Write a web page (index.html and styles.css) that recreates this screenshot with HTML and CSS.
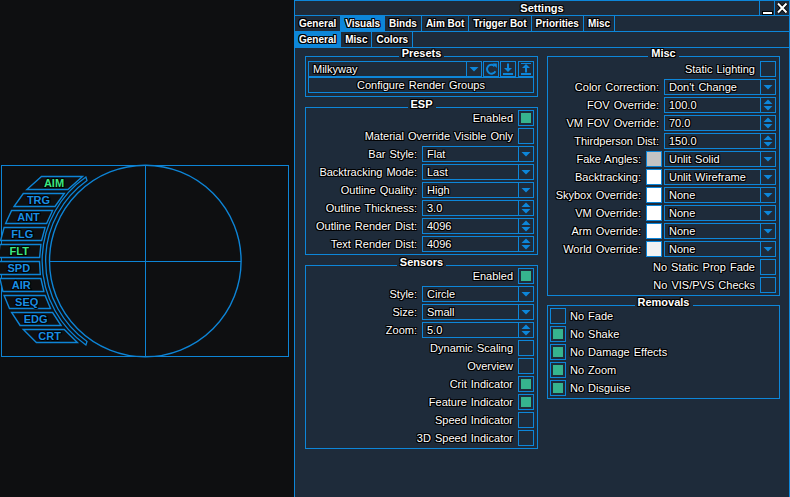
FILE: index.html
```html
<!DOCTYPE html>
<html>
<head>
<meta charset="utf-8">
<link rel="stylesheet" href="styles.css">
</head>
<body>
<div class="desktop">
  <div class="radar-pane">
    <svg class="radar" width="294" height="497" viewBox="0 0 294 497">
      <g fill="none" stroke="#0d84d6">
        <rect x="1.5" y="165.5" width="287" height="191"/>
        <circle cx="145.3" cy="261" r="95.8" stroke-width="1.4"/>
        <line x1="49" y1="261.5" x2="241" y2="261.5"/>
        <line x1="145.5" y1="165" x2="145.5" y2="357"/>
        <path stroke-width="1.3" d="M85.9 177 A102.5 102.5 0 0 0 85.9 345 L87 341.5 A99 99 0 0 1 87 180.5 Z"/>
        <g stroke-width="1.4" fill="#0e0f11">
          <polygon points="41.5,176.5 82.5,176.5 67.9,189.5 26.9,189.5"/>
          <polygon points="23.3,193.5 64.3,193.5 55,206.5 14,206.5"/>
          <polygon points="11.6,210.5 52.6,210.5 46.6,223.5 5.6,223.5"/>
          <polygon points="4.1,227.5 45.1,227.5 41.6,240.5 0.6,240.5"/>
          <polygon points="-0.1,244.5 40.9,244.5 39.6,257.5 -1.4,257.5"/>
          <polygon points="-1.5,261.5 39.5,261.5 40.3,274.5 -0.7,274.5"/>
          <polygon points="-0.1,278.5 40.9,278.5 43.9,291.5 2.9,291.5"/>
          <polygon points="4.1,295.5 45.1,295.5 50.5,308.5 9.5,308.5"/>
          <polygon points="11.6,312.5 52.6,312.5 61.1,325.5 20.1,325.5"/>
          <polygon points="23.3,329.5 64.3,329.5 77.4,342.5 36.4,342.5"/>
        </g>
      </g>
      <g class="radar-labels" text-anchor="middle">
        <text x="54" y="187" class="hot">AIM</text>
        <text x="38.5" y="204">TRG</text>
        <text x="28.5" y="221">ANT</text>
        <text x="22.3" y="238">FLG</text>
        <text x="19.2" y="255" class="hot">FLT</text>
        <text x="18.8" y="272">SPD</text>
        <text x="21.3" y="289">AIR</text>
        <text x="26.7" y="306">SEQ</text>
        <text x="35.6" y="323">EDG</text>
        <text x="49.6" y="340">CRT</text>
      </g>
    </svg>
  </div>

  <div class="window">
    <div class="titlebar">
      <div class="title">Settings</div>
      <div class="tb-btn">
        <svg width="14" height="14" viewBox="0 0 14 14">
          <rect x="2" y="10" width="11" height="4" fill="#000"/>
          <rect x="3" y="11" width="9" height="2" fill="#fff"/>
        </svg>
      </div>
      <div class="tb-btn">
        <svg width="14" height="14" viewBox="0 0 14 14">
          <path d="M3 2.5 L11.5 11.5 M11.5 2.5 L3 11.5" stroke="#000" stroke-width="4"/>
          <path d="M3 2.5 L11.5 11.5 M11.5 2.5 L3 11.5" stroke="#fff" stroke-width="2"/>
        </svg>
      </div>
    </div>

    <div class="tabs">
      <div class="tab">General</div>
      <div class="tab active">Visuals</div>
      <div class="tab">Binds</div>
      <div class="tab">Aim Bot</div>
      <div class="tab">Trigger Bot</div>
      <div class="tab">Priorities</div>
      <div class="tab">Misc</div>
    </div>
    <div class="tabs">
      <div class="tab active">General</div>
      <div class="tab">Misc</div>
      <div class="tab">Colors</div>
    </div>

    <div class="content">
      <div class="col">
        <section class="group">
          <div class="group-head"><span>Presets</span></div>
          <div class="group-body presets">
            <div class="preset-row">
              <div class="select wide">
                <span class="val">Milkyway</span>
                <span class="arrow"><svg width="14" height="14" viewBox="0 0 14 14"><polygon points="2.5,5 11.5,5 7,9.5"/></svg></span>
              </div>
              <div class="icon-btn">
                <svg width="14" height="14" viewBox="0 0 14 14"><path d="M10.6 4.2 A4.4 4.4 0 1 0 11.4 9.2" fill="none" stroke-width="2"/><polygon points="8.4,1.6 12.8,1.6 12.8,6" stroke="none"/></svg>
              </div>
              <div class="icon-btn">
                <svg width="14" height="14" viewBox="0 0 14 14"><path d="M7 1.5 V8" stroke-width="2"/><polygon points="3,6 11,6 7,10" stroke="none"/><rect x="2" y="11" width="10" height="2" stroke="none"/></svg>
              </div>
              <div class="icon-btn last">
                <svg width="14" height="14" viewBox="0 0 14 14"><path d="M7 5 V10.5" stroke-width="2"/><polygon points="3,6 11,6 7,2" stroke="none"/><rect x="2" y="11" width="10" height="2" stroke="none"/><rect x="2" y="1" width="10" height="1" stroke="none"/></svg>
              </div>
            </div>
            <div class="btn">Configure Render Groups</div>
          </div>
        </section>

        <section class="group">
          <div class="group-head"><span>ESP</span></div>
          <div class="group-body">
            <div class="row"><span class="label">Enabled</span><span class="check on"></span></div>
            <div class="row"><span class="label">Material Override Visible Only</span><span class="check"></span></div>
            <div class="row"><span class="label">Bar Style:</span><div class="select"><span class="val">Flat</span><span class="arrow"><svg width="14" height="14" viewBox="0 0 14 14"><polygon points="2.5,5 11.5,5 7,9.5"/></svg></span></div></div>
            <div class="row"><span class="label">Backtracking Mode:</span><div class="select"><span class="val">Last</span><span class="arrow"><svg width="14" height="14" viewBox="0 0 14 14"><polygon points="2.5,5 11.5,5 7,9.5"/></svg></span></div></div>
            <div class="row"><span class="label">Outline Quality:</span><div class="select"><span class="val">High</span><span class="arrow"><svg width="14" height="14" viewBox="0 0 14 14"><polygon points="2.5,5 11.5,5 7,9.5"/></svg></span></div></div>
            <div class="row"><span class="label">Outline Thickness:</span><div class="select"><span class="val">3.0</span><span class="arrow"><svg width="14" height="14" viewBox="0 0 14 14"><polygon points="2.5,6 11.5,6 7,1.5"/><polygon points="2.5,8 11.5,8 7,12.5"/></svg></span></div></div>
            <div class="row"><span class="label">Outline Render Dist:</span><div class="select"><span class="val">4096</span><span class="arrow"><svg width="14" height="14" viewBox="0 0 14 14"><polygon points="2.5,6 11.5,6 7,1.5"/><polygon points="2.5,8 11.5,8 7,12.5"/></svg></span></div></div>
            <div class="row"><span class="label">Text Render Dist:</span><div class="select"><span class="val">4096</span><span class="arrow"><svg width="14" height="14" viewBox="0 0 14 14"><polygon points="2.5,6 11.5,6 7,1.5"/><polygon points="2.5,8 11.5,8 7,12.5"/></svg></span></div></div>
          </div>
        </section>

        <section class="group">
          <div class="group-head"><span>Sensors</span></div>
          <div class="group-body">
            <div class="row"><span class="label">Enabled</span><span class="check on"></span></div>
            <div class="row"><span class="label">Style:</span><div class="select"><span class="val">Circle</span><span class="arrow"><svg width="14" height="14" viewBox="0 0 14 14"><polygon points="2.5,5 11.5,5 7,9.5"/></svg></span></div></div>
            <div class="row"><span class="label">Size:</span><div class="select"><span class="val">Small</span><span class="arrow"><svg width="14" height="14" viewBox="0 0 14 14"><polygon points="2.5,5 11.5,5 7,9.5"/></svg></span></div></div>
            <div class="row"><span class="label">Zoom:</span><div class="select"><span class="val">5.0</span><span class="arrow"><svg width="14" height="14" viewBox="0 0 14 14"><polygon points="2.5,6 11.5,6 7,1.5"/><polygon points="2.5,8 11.5,8 7,12.5"/></svg></span></div></div>
            <div class="row"><span class="label">Dynamic Scaling</span><span class="check"></span></div>
            <div class="row"><span class="label">Overview</span><span class="check"></span></div>
            <div class="row"><span class="label">Crit Indicator</span><span class="check on"></span></div>
            <div class="row"><span class="label">Feature Indicator</span><span class="check on"></span></div>
            <div class="row"><span class="label">Speed Indicator</span><span class="check"></span></div>
            <div class="row"><span class="label">3D Speed Indicator</span><span class="check"></span></div>
          </div>
        </section>
      </div>

      <div class="col right">
        <section class="group">
          <div class="group-head"><span>Misc</span></div>
          <div class="group-body misc">
            <div class="row"><span class="label">Static Lighting</span><span class="check"></span></div>
            <div class="row"><span class="label">Color Correction:</span><div class="select"><span class="val">Don't Change</span><span class="arrow"><svg width="14" height="14" viewBox="0 0 14 14"><polygon points="2.5,5 11.5,5 7,9.5"/></svg></span></div></div>
            <div class="row"><span class="label">FOV Override:</span><div class="select"><span class="val">100.0</span><span class="arrow"><svg width="14" height="14" viewBox="0 0 14 14"><polygon points="2.5,6 11.5,6 7,1.5"/><polygon points="2.5,8 11.5,8 7,12.5"/></svg></span></div></div>
            <div class="row"><span class="label">VM FOV Override:</span><div class="select"><span class="val">70.0</span><span class="arrow"><svg width="14" height="14" viewBox="0 0 14 14"><polygon points="2.5,6 11.5,6 7,1.5"/><polygon points="2.5,8 11.5,8 7,12.5"/></svg></span></div></div>
            <div class="row"><span class="label">Thirdperson Dist:</span><div class="select"><span class="val">150.0</span><span class="arrow"><svg width="14" height="14" viewBox="0 0 14 14"><polygon points="2.5,6 11.5,6 7,1.5"/><polygon points="2.5,8 11.5,8 7,12.5"/></svg></span></div></div>
            <div class="row"><span class="label">Fake Angles:</span><div class="ctrl"><span class="swatch gray"></span><div class="select"><span class="val">Unlit Solid</span><span class="arrow"><svg width="14" height="14" viewBox="0 0 14 14"><polygon points="2.5,5 11.5,5 7,9.5"/></svg></span></div></div></div>
            <div class="row"><span class="label">Backtracking:</span><div class="ctrl"><span class="swatch"></span><div class="select"><span class="val">Unlit Wireframe</span><span class="arrow"><svg width="14" height="14" viewBox="0 0 14 14"><polygon points="2.5,5 11.5,5 7,9.5"/></svg></span></div></div></div>
            <div class="row"><span class="label">Skybox Override:</span><div class="ctrl"><span class="swatch"></span><div class="select"><span class="val">None</span><span class="arrow"><svg width="14" height="14" viewBox="0 0 14 14"><polygon points="2.5,5 11.5,5 7,9.5"/></svg></span></div></div></div>
            <div class="row"><span class="label">VM Override:</span><div class="ctrl"><span class="swatch"></span><div class="select"><span class="val">None</span><span class="arrow"><svg width="14" height="14" viewBox="0 0 14 14"><polygon points="2.5,5 11.5,5 7,9.5"/></svg></span></div></div></div>
            <div class="row"><span class="label">Arm Override:</span><div class="ctrl"><span class="swatch"></span><div class="select"><span class="val">None</span><span class="arrow"><svg width="14" height="14" viewBox="0 0 14 14"><polygon points="2.5,5 11.5,5 7,9.5"/></svg></span></div></div></div>
            <div class="row"><span class="label">World Override:</span><div class="ctrl"><span class="swatch offwhite"></span><div class="select"><span class="val">None</span><span class="arrow"><svg width="14" height="14" viewBox="0 0 14 14"><polygon points="2.5,5 11.5,5 7,9.5"/></svg></span></div></div></div>
            <div class="row"><span class="label">No Static Prop Fade</span><span class="check"></span></div>
            <div class="row"><span class="label">No VIS/PVS Checks</span><span class="check"></span></div>
          </div>
        </section>

        <section class="group">
          <div class="group-head"><span>Removals</span></div>
          <div class="group-body">
            <div class="row left"><span class="check"></span><span class="label">No Fade</span></div>
            <div class="row left"><span class="check on"></span><span class="label">No Shake</span></div>
            <div class="row left"><span class="check on"></span><span class="label">No Damage Effects</span></div>
            <div class="row left"><span class="check on"></span><span class="label">No Zoom</span></div>
            <div class="row left"><span class="check on"></span><span class="label">No Disguise</span></div>
          </div>
        </section>
      </div>
    </div>
  </div>
</div>
</body>
</html>
```
FILE: styles.css
```css
:root {
  --blue: #0d86d9;
  --panel: #1e2b3a;
  --dark: #0e0f11;
  --green: #36b48e;
}

* { box-sizing: border-box; }

body {
  margin: 0;
  background: var(--dark);
  font-family: "Liberation Sans", Arial, sans-serif;
  font-size: 11px;
  color: #fff;
}

.desktop {
  display: flex;
  width: 790px;
  height: 497px;
  overflow: hidden;
}

.radar-pane { width: 294px; flex: none; }
.radar { display: block; }

.radar-labels text {
  font-family: "Liberation Sans", Arial, sans-serif;
  font-weight: bold;
  font-size: 11px;
  fill: #1a8fe3;
  stroke: #000;
  stroke-width: 2px;
  paint-order: stroke;
}
.radar-labels text.hot { fill: #3ee882; }

.window {
  width: 496px;
  height: 497px;
  flex: none;
  background: var(--panel);
  border: 1px solid var(--blue);
  border-bottom: none;
  display: flex;
  flex-direction: column;
}

.label, .val, .btn, .title, .tab, .group-head span {
  text-shadow: 1px 0 #000, -1px 0 #000, 0 1px #000, 0 -1px #000,
               1px 1px #000, -1px -1px #000, 1px -1px #000, -1px 1px #000;
  white-space: nowrap;
}
.label, .val, .btn { word-spacing: 1px; }

/* title bar */
.titlebar {
  display: flex;
  height: 15px;
  border-bottom: 1px solid var(--blue);
}
.title {
  flex: 1;
  text-align: center;
  font-weight: bold;
  line-height: 14px;
  padding-left: 30px;
}
.tb-btn {
  width: 15px;
  border-left: 1px solid var(--blue);
}
.tb-btn svg { display: block; }

/* tabs */
.tabs {
  display: flex;
  height: 16px;
  border-bottom: 1px solid var(--blue);
}
.tab {
  padding: 0 4px;
  border-right: 1px solid var(--blue);
  font-weight: bold;
  font-size: 10px;
  line-height: 15px;
}
.tab.active { background: var(--blue); }

/* content */
.content {
  display: flex;
  gap: 9px;
  padding: 0 9px 0 10px;
}
.col {
  width: 233px;
  display: flex;
  flex-direction: column;
  gap: 2px;
}
.col.right { gap: 1px; }

.group-head {
  display: flex;
  align-items: flex-end;
  height: 10px;
}
.group-head::before,
.group-head::after {
  content: "";
  flex: 1;
  height: 1px;
  border-top: 1px solid var(--blue);
}
.group-head::before { border-left: 1px solid var(--blue); }
.group-head::after { border-right: 1px solid var(--blue); }
.group-head span {
  align-self: center;
  font-weight: bold;
  line-height: 10px;
  padding: 0 3px;
}

.group-body {
  border: 1px solid var(--blue);
  border-top: none;
  padding: 1px 3px 2px 2px;
  display: flex;
  flex-direction: column;
  gap: 2px;
}
.group-body.presets { padding-top: 3px; padding-bottom: 3px; gap: 0; }
.group-body.misc { padding-top: 3px; }

.row {
  display: flex;
  align-items: center;
  justify-content: flex-end;
  gap: 5px;
  height: 16px;
}
.row.left { justify-content: flex-start; gap: 4px; }
.label { line-height: 16px; }

.check {
  width: 16px;
  height: 16px;
  flex: none;
  border: 1px solid var(--blue);
  padding: 2px;
}
.check.on {
  background: var(--green);
  background-clip: content-box;
}

.ctrl { display: flex; gap: 2px; }
.swatch {
  width: 16px;
  height: 16px;
  border: 1px solid var(--blue);
  background: #fff;
}
.swatch.gray { background: #c3c3c3; }
.swatch.offwhite { background: #f2f2f2; }

.select {
  width: 112px;
  height: 16px;
  flex: none;
  display: flex;
  border: 1px solid var(--blue);
}
.select.wide { flex: 1; width: auto; }
.select .val {
  flex: 1;
  padding-left: 4px;
  line-height: 14px;
}
.select .arrow {
  width: 15px;
  border-left: 1px solid var(--blue);
}
.arrow svg { display: block; fill: var(--blue); }

.preset-row {
  display: flex;
  gap: 1px;
  height: 16px;
}
.icon-btn {
  width: 16px;
  height: 16px;
  flex: none;
  border: 1px solid var(--blue);
}
.icon-btn.last { margin-left: 1px; }
.icon-btn svg { display: block; fill: var(--blue); stroke: var(--blue); }

.btn {
  height: 16px;
  border: 1px solid var(--blue);
  text-align: center;
  line-height: 14px;
}
```
